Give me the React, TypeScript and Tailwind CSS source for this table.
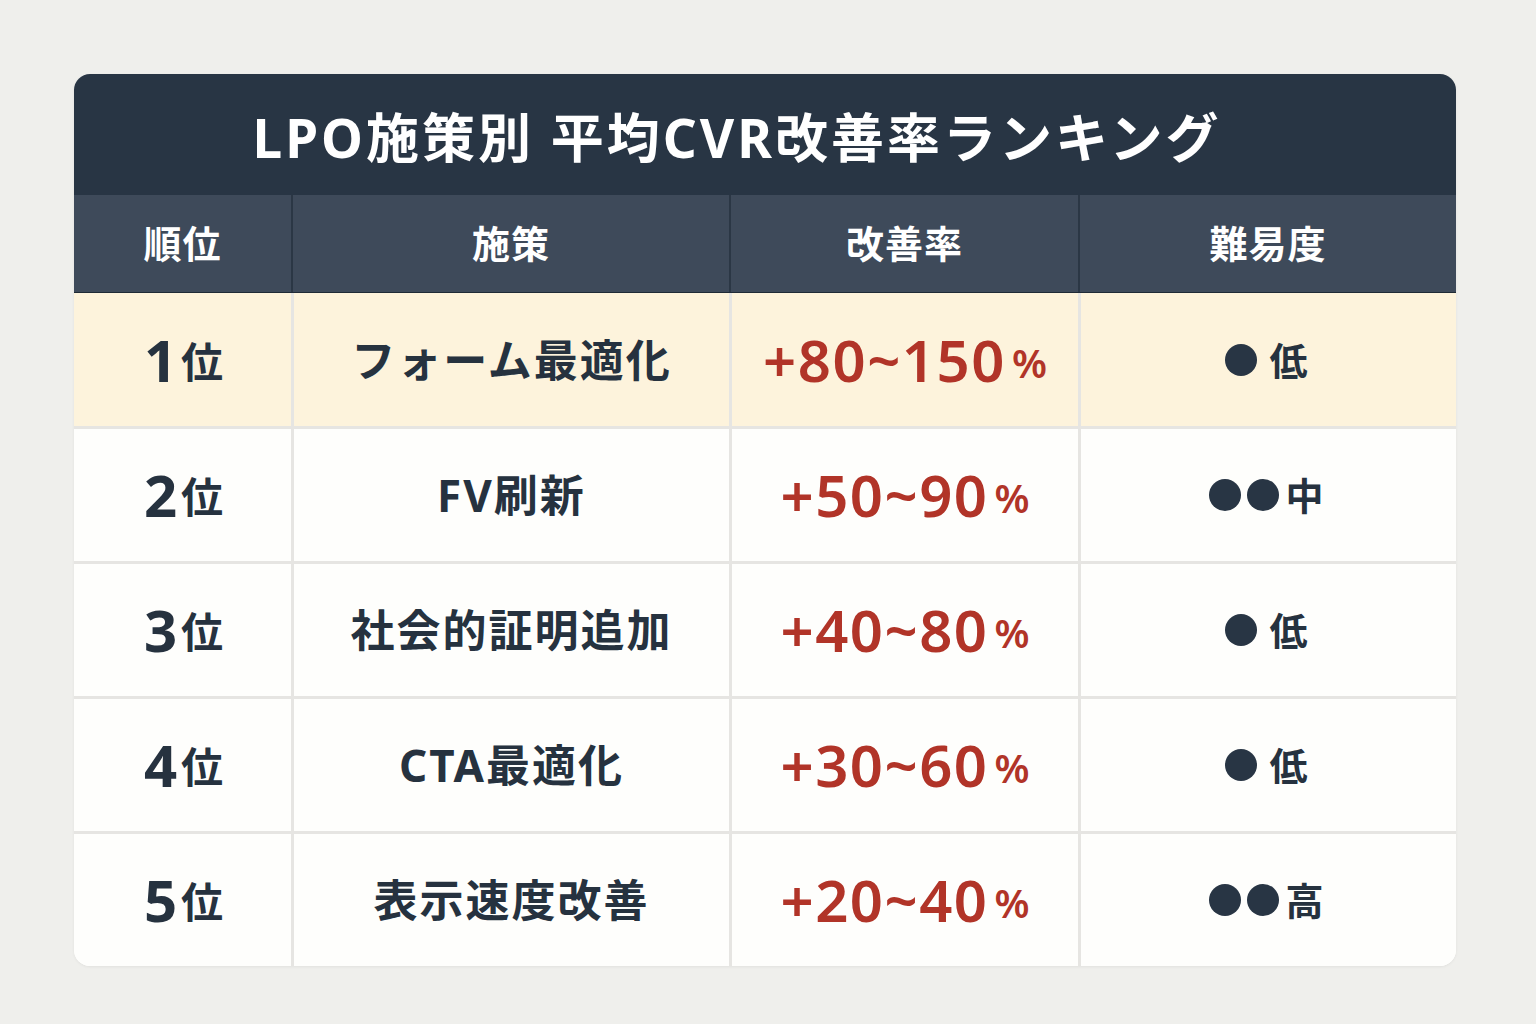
import React from 'react';

interface RankRow {
  rank: number;
  name: string;
  from: number;
  to: number;
  dots: number;
  level: string;
}

const rows: RankRow[] = [
  { rank: 1, name: 'フォーム最適化', from: 80, to: 150, dots: 1, level: '低' },
  { rank: 2, name: 'FV刷新', from: 50, to: 90, dots: 2, level: '中' },
  { rank: 3, name: '社会的証明追加', from: 40, to: 80, dots: 1, level: '低' },
  { rank: 4, name: 'CTA最適化', from: 30, to: 60, dots: 1, level: '低' },
  { rank: 5, name: '表示速度改善', from: 20, to: 40, dots: 2, level: '高' },
];

const font = "font-['Noto_Sans','Noto_Sans_CJK_JP',sans-serif]";
const cols = 'grid grid-cols-[217px_438px_349px_378px]';

const Dots = ({ count, level }: { count: number; level: string }): JSX.Element => (
  <div className="flex items-center">
    <div className={`flex items-center gap-[6px] ${count === 1 ? 'mr-[12px]' : 'mr-[6px]'}`}>
      {Array.from({ length: count }).map((_, i) => (
        <span key={i} className="block w-[32px] h-[32px] rounded-full bg-[#283544]" />
      ))}
    </div>
    <span className="text-[38px] font-bold leading-none text-[#26323f]">{level}</span>
  </div>
);

const App: React.FC = (): JSX.Element => {
  return (
    <div className={`min-h-[1024px] w-full bg-[#efefec] pt-[74px] ${font}`}>
      <div className="ml-[74px] w-[1382px] rounded-[16px] overflow-hidden bg-[#fefefc] shadow-[0_1px_3px_rgba(0,0,0,0.06)]">
        {/* Title */}
        <div className="h-[121px] bg-[#283544] flex items-center justify-center pr-[56px] pt-[6px]">
          <h1 className="text-[53px] font-bold text-white leading-none tracking-[3px]">
            LPO施策別 平均CVR改善率ランキング
          </h1>
        </div>

        {/* Header */}
        <div className={`${cols} h-[98px] bg-[#3e4a5a] border-b border-[#1f2a36]`}>
          {['順位', '施策', '改善率', '難易度'].map((h, i) => (
            <div
              key={h}
              className={`flex items-center justify-center text-[38px] font-bold text-white tracking-[1px] ${i > 0 ? 'border-l-2 border-[#2b3745]' : ''}`}
            >
              {h}
            </div>
          ))}
        </div>

        {/* Rows */}
        {rows.map((r, idx) => (
          <div
            key={r.rank}
            className={`${cols} ${idx === 0 ? 'h-[133px] bg-[#fdf3dc]' : 'h-[135px] bg-[#fefefc] border-t-[3px] border-[#e6e5e2]'} text-[#26323f]`}
          >
            <div className="flex items-center justify-center pl-[2px]">
              <span className="text-[58px] font-bold leading-none">{r.rank}</span>
              <span className="text-[42px] font-bold leading-none ml-[4px] mt-[4px]">位</span>
            </div>
            <div className="flex items-center justify-center border-l-[3px] border-[#e6e5e2] text-[44px] font-bold tracking-[2px]">
              {r.name}
            </div>
            <div className="flex items-center justify-center border-l-[3px] border-[#e6e5e2] text-[#b13428]">
              <span className="text-[58px] font-semibold leading-none tracking-[1.5px]">
                +{r.from}~{r.to}
              </span>
              <span className="text-[40px] font-semibold leading-none ml-[6px] mt-[6px]">%</span>
            </div>
            <div className="flex items-center justify-center border-l-[3px] border-[#e6e5e2] pr-[4px]">
              <Dots count={r.dots} level={r.level} />
            </div>
          </div>
        ))}
      </div>
    </div>
  );
};

export default App;
